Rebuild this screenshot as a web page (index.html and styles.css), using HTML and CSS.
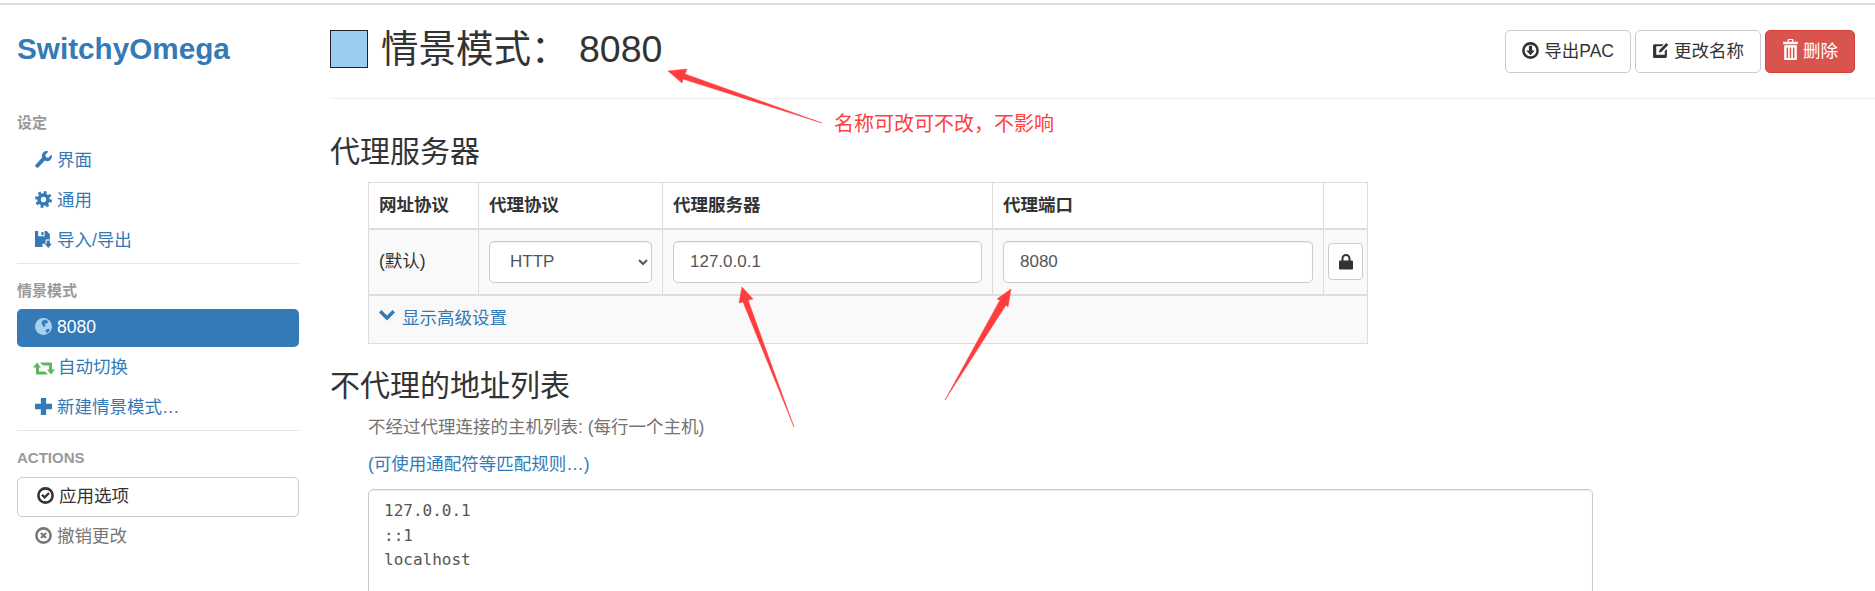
FILE: index.html
```html
<!DOCTYPE html>
<html lang="zh">
<head>
<meta charset="utf-8">
<title>SwitchyOmega</title>
<link rel="stylesheet" href="styles.css">
</head>
<body>
<div class="topline"></div>
<div class="app">
  <aside class="sidebar">
    <h1 class="brand">SwitchyOmega</h1>
    <nav>
      <div class="nav-head first">设定</div>
      <a class="nav-item"><svg class="ico" viewBox="0 0 16 16"><path d="M15.6 3.4l-3 3-2.300-.6-.6-2.300 3-3a4.500 4.500 0 0 0-6 5.700L.8 12.800a1.700 1.700 0 0 0 2.400 2.400l6.100-6.200a4.500 4.500 0 0 0 6.300-5.600z"/></svg>界面</a>
      <a class="nav-item"><svg class="ico" viewBox="0 0 16 16"><circle cx="8" cy="8" r="4.200" fill="none" stroke="currentColor" stroke-width="3.400"/><circle cx="8" cy="8" r="6.600" fill="none" stroke="currentColor" stroke-width="2.800" stroke-dasharray="2.600 2.584"/></svg>通用</a>
      <a class="nav-item"><svg class="ico" viewBox="0 0 16 16"><path fill-rule="evenodd" d="M0 0h11l3 3v5h-4v4H7v3H0zM3 0v5h6V0zM6 1h2v3H6z"/><path d="M11 9h3v3h2l-3.500 4L9 12h2z"/></svg>导入/导出</a>
      <div class="divider"></div>
      <div class="nav-head">情景模式</div>
      <a class="nav-item active"><svg class="ico" viewBox="0 0 16 16"><circle cx="8" cy="8" r="8" fill="#a5d2f3"/><path fill="#337ab7" d="M7 2.500l3-1 2.500 2-1.500 2-2-.5 1 2.500-2 1-1-2-1-2zM10 11l3-1 1 1-2 3-2-1z"/></svg>8080</a>
      <a class="nav-item"><svg class="ico ico-wide" viewBox="0 0 22 16"><path fill="#5cb85c" d="M0 7l4-5 4 5H6v4h6l3 3H3V7zM22 9l-4 5-4-5h2V5h-6L7 2h12v7z"/></svg>自动切换</a>
      <a class="nav-item"><svg class="ico" viewBox="0 0 16 16"><path d="M5.500 0h5v5.500H16v5h-5.500V16h-5v-5.500H0v-5h5.500z"/></svg>新建情景模式…</a>
      <div class="divider"></div>
      <div class="nav-head actions-head">ACTIONS</div>
      <a class="nav-btn"><svg class="ico" viewBox="0 0 16 16"><circle cx="8" cy="8" r="6.700" fill="none" stroke="currentColor" stroke-width="2.400"/><path d="M3.900 8l1.500-1.500 1.800 1.800 3.400-3.400 1.500 1.500-4.900 4.900z"/></svg>应用选项</a>
      <a class="nav-item muted"><svg class="ico" viewBox="0 0 16 16"><circle cx="8" cy="8" r="6.700" fill="none" stroke="currentColor" stroke-width="2.400"/><path d="M6.300 4.900L8 6.600l1.700-1.700 1.400 1.400L9.400 8l1.700 1.700-1.400 1.400L8 9.400l-1.700 1.700-1.400-1.400L6.600 8 4.900 6.300z"/></svg>撤销更改</a>
    </nav>
  </aside>
  <main class="main">
    <header class="page-head">
      <h2 class="title"><span class="swatch"></span><span class="title-text">情景模式&#xFF1A;</span><span class="title-name">8080</span></h2>
      <div class="actions">
        <button class="btn"><svg class="ico" viewBox="0 0 16 16"><circle cx="8" cy="8" r="6.700" fill="none" stroke="currentColor" stroke-width="2.400"/><path d="M6.500 3.500h3V8H12l-4 4.500L4 8h2.500z"/></svg>导出PAC</button>
        <button class="btn"><svg class="ico" viewBox="0 0 16 16"><path d="M2.500 2H11L9 4H4v8h8V8.500l2-2v6.800c0 1-.7 1.700-1.700 1.700H2.500C1.200 15 1 14.300 1 13.300V3.700C1 2.700 1.500 2 2.500 2z"/><path d="M13.500 1l1.800 1.800-6.300 6.400-2.700.9.900-2.800z"/></svg>更改名称</button>
        <button class="btn btn-danger"><svg class="ico ico-tall" viewBox="0 0 16 20"><path fill-rule="evenodd" d="M5.500 0h5l.5 2.500h4V5H1V2.500h4zM6.500 1l-.2 1.500h3.400L9.500 1zM2 6h12v14H2zM4.300 8v10h1.400V8zM7.300 8v10h1.400V8zM10.300 8v10h1.400V8z"/></svg>删除</button>
      </div>
    </header>

    <h3 class="section-title first">代理服务器</h3>
    <table class="proxy">
      <thead>
        <tr><th class="c1">网址协议</th><th class="c2">代理协议</th><th class="c3">代理服务器</th><th class="c4">代理端口</th><th class="c5"></th></tr>
      </thead>
      <tbody>
        <tr>
          <td>(默认)</td>
          <td><select class="field"><option>HTTP</option></select></td>
          <td><input class="field" type="text" value="127.0.0.1"></td>
          <td><input class="field" type="text" value="8080"></td>
          <td class="lock-cell"><button class="lock"><svg viewBox="0 0 16 16"><path fill-rule="evenodd" d="M2 7h1.500V5a4.500 4.500 0 0 1 9 0v2H14a1 1 0 0 1 1 1v7a1 1 0 0 1-1 1H2a1 1 0 0 1-1-1V8a1 1 0 0 1 1-1zM5.500 7h5V5a2.500 2.500 0 0 0-5 0z"/></svg></button></td>
        </tr>
        <tr>
          <td class="more" colspan="5"><a class="more-link"><svg class="chev" viewBox="0 0 16 12"><path d="M2.500 1L8 6.500 13.500 1 16 3.500 8 11.500 0 3.500z"/></svg>显示高级设置</a></td>
        </tr>
      </tbody>
    </table>

    <h3 class="section-title second">不代理的地址列表</h3>
    <div class="indent">
      <p class="help">不经过代理连接的主机列表: (每行一个主机)</p>
      <p class="link-line"><a class="link">(可使用通配符等匹配规则…)</a></p>
      <textarea class="bypass" readonly>127.0.0.1
::1
localhost</textarea>
    </div>
  </main>
</div>
<div class="note">名称可改可不改&#xFF0C;不影响</div>
<svg class="arrows" viewBox="0 0 1875 591">
  <polygon points="668,71 687,69 685,74 822,123 683,79 682,83"/>
  <polygon points="742,287 753,299 748,300 794,427 743,302 739,303"/>
  <polygon points="1011,289 1008,307 1006,305 945,400 1000,300 997,299"/>
</svg>
</body>
</html>
```
FILE: styles.css
```css
* { box-sizing: border-box; }
html, body { height: 591px; margin: 0; overflow: hidden; background: #fff; }
body {
  position: relative;
  padding-top: 3px;
  font-family: "Liberation Sans", "Noto Sans CJK SC", sans-serif;
  font-size: 17.500px;
  line-height: 1.43;
  color: #333;
}
.topline { height: 2px; background: #dcdce2; }
.app { display: flex; align-items: flex-start; }

.sidebar { width: 282px; margin-left: 17px; flex: none; }
.brand { margin: 27px 0 0; font-size: 29.700px; line-height: 34px; font-weight: 700; color: #337ab7; }
.nav-head { margin-bottom: 8px; font-size: 15px; line-height: 20px; font-weight: 700; color: #999; }
.nav-head.first { margin-top: 47px; }
.nav-head.actions-head { margin-bottom: 9px; }
.nav-item, .nav-btn { display: flex; align-items: center; height: 40px; padding-left: 18px; color: #337ab7; }
.ico { width: 17px; height: 17px; margin-right: 5px; margin-bottom: 3px; flex: none; fill: currentColor; }
.ico-wide { width: 22px; margin-left: -2px; margin-right: 3px; margin-bottom: 0; }
.ico-tall { height: 21px; margin-right: 4px; margin-bottom: 5px; }
.nav-item.active { height: 38px; margin: 0 0 1px; border-radius: 5px; background: #337ab7; color: #fff; }
.nav-item.muted { color: #777; }
.divider { height: 1px; margin: 2px 0 17px; background: #e5e5e5; }
.nav-btn { margin-top: 1px; padding-left: 19px; border: 1px solid #ccc; border-radius: 5px; color: #333; }

.main { flex: 1; margin-left: 31px; min-width: 0; }
.page-head { display: flex; justify-content: space-between; align-items: flex-start; height: 94px; padding: 25px 20px 0 0; border-bottom: 1px solid #eee; }
.title { display: flex; align-items: center; margin: 0; height: 38px; font-size: 37.500px; line-height: 38px; font-weight: 400; }
.swatch { width: 38px; height: 38px; margin-right: 13px; border: 1px solid #222; background: #9bcdf0; }
.title-text { width: 198px; }
.actions { display: flex; gap: 4px; }
.btn { display: flex; align-items: center; height: 43px; padding: 0 16px; font: inherit; color: #333; background: #fff; border: 1px solid #ccc; border-radius: 5px; }
.btn-danger { color: #fff; background: #d9534f; border-color: #d43f3a; }

.section-title { margin: 0; font-size: 30px; line-height: 36px; font-weight: 400; }
.section-title.first { margin-top: 35px; }
.section-title.second { margin-top: 24px; }

.proxy { margin: 12px 0 0 38px; width: 999px; border-collapse: collapse; table-layout: fixed; }
.proxy th, .proxy td { padding: 0 10px; border: 1px solid #ddd; text-align: left; }
.proxy th { height: 46px; font-weight: 700; border-bottom-width: 2px; }
.proxy td { height: 66px; background: #f9f9f9; border-bottom-width: 2px; }
.proxy .more { height: 49px; padding-bottom: 2px; border-bottom-width: 1px; }
.c1 { width: 110px; }
.c2 { width: 184px; }
.c3 { width: 330px; }
.c4 { width: 331px; }
.c5 { width: 44px; }
.field { display: block; width: 100%; height: 42px; padding: 0 16px; font: inherit; font-size: 17px; color: #555; background: #fff; border: 1px solid #ccc; border-radius: 5px; box-shadow: inset 0 1px 1px rgba(0,0,0,.075); }
.proxy .lock-cell { padding: 0 4px; }
.lock { display: flex; align-items: center; justify-content: center; width: 35px; height: 37px; padding: 0; background: #fff; border: 1px solid #ccc; border-radius: 4px; }
.lock svg { width: 16px; height: 17px; fill: #333; }
.more-link { display: flex; align-items: center; color: #337ab7; }
.chev { width: 16px; height: 12px; margin-right: 7px; margin-bottom: 6px; fill: currentColor; }

.indent { margin-left: 38px; }
.help { margin: 11px 0 0; line-height: 24px; color: #737373; }
.link-line { margin: 13px 0 0; line-height: 24px; }
.link { color: #337ab7; }
.bypass { display: block; width: 1225px; height: 200px; margin-top: 13px; padding: 9px 15px; font-family: "DejaVu Sans Mono", monospace; font-size: 16px; line-height: 24.600px; color: #555; border: 1px solid #ccc; border-radius: 5px; resize: none; box-shadow: inset 0 1px 1px rgba(0,0,0,.075); outline: none; }

.note { position: absolute; left: 834px; top: 110px; font-size: 20px; line-height: 28px; color: #ff4040; }
.arrows { position: absolute; left: 0; top: 0; width: 1875px; height: 591px; fill: #ff3d3d; stroke: #ff3d3d; stroke-width: .5; pointer-events: none; }
```
